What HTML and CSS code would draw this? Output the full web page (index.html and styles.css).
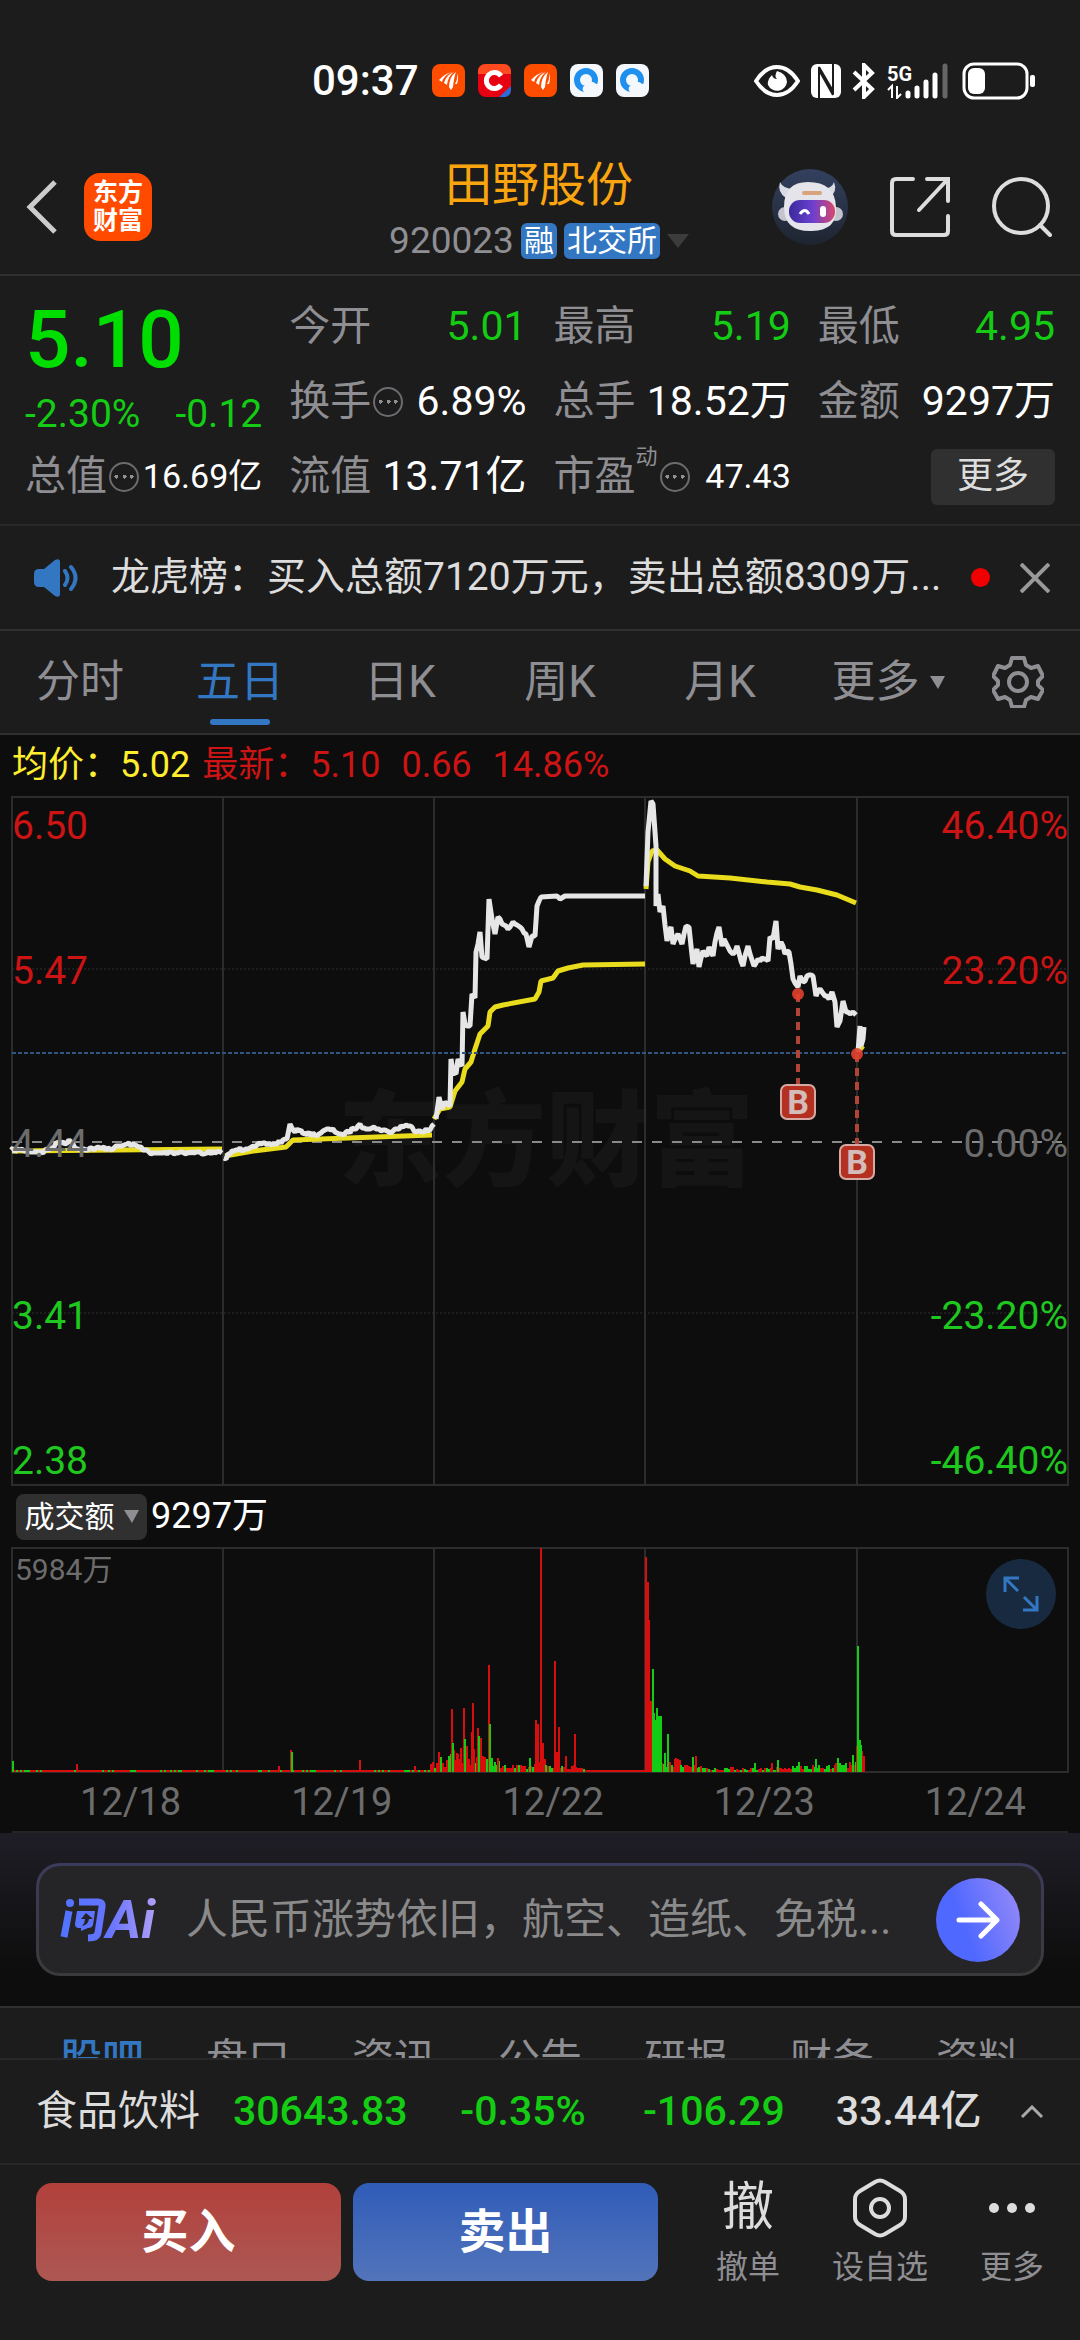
FILE: index.html
```html
<!DOCTYPE html>
<html lang="zh-CN">
<head>
    <meta charset="UTF-8">
    <meta name="viewport" content="width=device-width, initial-scale=1.0">
    <title>田野股份 920023</title>
    <link rel="stylesheet" href="styles.css">
</head>
<body>
    <div class="status-bar">
        <div class="status-left">
            <span class="time">09:37</span>
            <svg class="app-icon" viewBox="0 0 33 33"><rect width="33" height="33" rx="8" fill="#ff4d00"/><path d="M7 16q5-6 13-8-8 3-10 10zM12 19q2-8 10-11-6 4-7 13zM17 23q0-10 7-15-2 5-3 15l-2 3zM23 20q3-5 2-11 2 5 0 11z" fill="#fff"/></svg>
            <svg class="app-icon" viewBox="0 0 33 33"><rect width="33" height="33" rx="8" fill="#e60012"/><path d="M0 8q0-8 8-8h17q8 0 8 8v2H0z" fill="#ff4a20"/><path d="M23 12a8 8 0 1 0 0 9" fill="none" stroke="#fff" stroke-width="5"/><path d="M33 22v3q0 8-8 8h-4z" fill="#2a6bd8"/></svg>
            <svg class="app-icon" viewBox="0 0 33 33"><rect width="33" height="33" rx="8" fill="#ff4d00"/><path d="M7 16q5-6 13-8-8 3-10 10zM12 19q2-8 10-11-6 4-7 13zM17 23q0-10 7-15-2 5-3 15l-2 3zM23 20q3-5 2-11 2 5 0 11z" fill="#fff"/></svg>
            <svg class="app-icon" viewBox="0 0 33 33"><rect width="33" height="33" rx="8" fill="#f4f8fc"/><circle cx="16" cy="16" r="9" fill="none" stroke="#1f90ee" stroke-width="6"/><path d="M14 28a4 4 0 0 1 2-7 6 6 0 0 1 10-1 4 4 0 0 1 3 8z" fill="#f4f8fc"/></svg>
            <svg class="app-icon" viewBox="0 0 33 33"><rect width="33" height="33" rx="8" fill="#f4f8fc"/><circle cx="16" cy="16" r="9" fill="none" stroke="#1f90ee" stroke-width="6"/><path d="M14 28a4 4 0 0 1 2-7 6 6 0 0 1 10-1 4 4 0 0 1 3 8z" fill="#f4f8fc"/></svg>
        </div>
        <div class="status-right">
            <svg width="46" height="34" viewBox="0 0 46 34"><path d="M2 17Q11 3 23 3t21 14Q35 31 23 31T2 17z" fill="none" stroke="#fff" stroke-width="4"/><path d="M23 7q-3 5 0 8-4 0-5-4-5 5-4 10a10 10 0 0 0 19-3q0-8-10-11z" fill="#fff"/></svg>
            <svg width="30" height="34" viewBox="0 0 30 34"><rect width="30" height="34" rx="6" fill="#fff"/><path d="M8 34V6l14 25M22 0v27L8 3" fill="none" stroke="#1c1c1c" stroke-width="2"/></svg>
            <svg width="24" height="36" viewBox="0 0 24 36"><path d="M2 9l18 17-8 8V2l8 8L2 27" fill="none" stroke="#fff" stroke-width="4"/></svg>
            <svg width="64" height="36" viewBox="0 0 64 36"><text x="0" y="18" class="net">5G</text><path d="M1 27l4-4v12M10 23v12l4-4" fill="none" stroke="#fff" stroke-width="2"/><path d="M21 30v3M30 25v8M39 19v14M48 12v21" stroke="#fff" stroke-width="5" stroke-linecap="round"/><path d="M58 3v30" stroke="#666" stroke-width="5" stroke-linecap="round"/></svg>
            <svg width="74" height="38" viewBox="0 0 74 38"><rect x="2" y="2" width="63" height="34" rx="10" fill="none" stroke="#fff" stroke-width="3"/><rect x="6" y="6" width="17" height="26" rx="6" fill="#fff"/><rect x="68" y="13" width="5" height="12" rx="2" fill="#fff"/></svg>
        </div>
    </div>

    <header class="header">
        <div class="header-left">
            <button class="icon-btn" aria-label="返回"><svg width="32" height="56" viewBox="0 0 32 56"><path d="M29 3L4 28l25 25" fill="none" stroke="#ccc" stroke-width="5"/></svg></button>
            <a href="#" class="brand"><span>东方</span><span>财富</span></a>
        </div>
        <div class="title">
            <h1>田野股份</h1>
            <div class="code-row">
                <span class="code">920023</span>
                <span class="badge">融</span>
                <span class="badge">北交所</span>
                <svg width="22" height="14" viewBox="0 0 22 14"><path d="M0 0h22L11 14z" fill="#3c3c3c"/></svg>
            </div>
        </div>
        <div class="header-right">
            <button class="icon-btn" aria-label="智能助手">
                <svg width="76" height="76" viewBox="0 0 76 76">
                    <defs><linearGradient id="visor"><stop offset="0" stop-color="#3a2a9c"/><stop offset="0.5" stop-color="#6a3fd0"/><stop offset="1" stop-color="#d8486c"/></linearGradient><linearGradient id="orb" x2="0" y2="1"><stop offset="0" stop-color="#33415f"/><stop offset="1" stop-color="#1e2430"/></linearGradient></defs>
                    <circle cx="38" cy="38" r="38" fill="url(#orb)"/>
                    <path d="M8 13q-3 10 6 16l8-9Q11 20 8 13zM62 13q4 10-5 16l-7-9q10 0 12-7z" fill="#d9dae2"/>
                    <circle cx="13" cy="45" r="7" fill="#c3c4ce"/><circle cx="64" cy="45" r="7" fill="#c3c4ce"/>
                    <path d="M12 38q0-25 24-25 27 0 28 25 2 23-24 24-28 1-28-24z" fill="#e4e4ea"/>
                    <rect x="30" y="22" width="20" height="4" rx="2" fill="#d9a47c"/>
                    <rect x="17" y="31" width="46" height="23" rx="11" fill="url(#visor)"/>
                    <path d="M28 45q5-7 9 0" fill="none" stroke="#fff" stroke-width="3"/><rect x="48" y="37" width="6" height="11" rx="3" fill="#fff"/>
                </svg>
            </button>
            <button class="icon-btn" aria-label="分享"><svg width="60" height="60" viewBox="0 0 60 60"><path d="M23 2H6q-4 0-4 4v48q0 4 4 4h48q4 0 4-4V39M37 2h21v22M57 3L29 33" fill="none" stroke="#ddd" stroke-width="4" stroke-linecap="round"/></svg></button>
            <button class="icon-btn" aria-label="搜索"><svg width="60" height="60" viewBox="0 0 60 60"><circle cx="29" cy="29" r="27" fill="none" stroke="#ddd" stroke-width="4"/><path d="M48 48l10 10" stroke="#ddd" stroke-width="4" stroke-linecap="round"/></svg></button>
        </div>
    </header>

    <section class="quote">
        <div class="price-box">
            <div class="price">5.10</div>
            <div class="change"><span>-2.30%</span><span>-0.12</span></div>
        </div>
        <div class="cell"><span class="label">今开</span><span class="value down">5.01</span></div>
        <div class="cell"><span class="label">最高</span><span class="value down">5.19</span></div>
        <div class="cell"><span class="label">最低</span><span class="value down">4.95</span></div>
        <div class="cell"><span class="label">换手<i class="info"></i></span><span class="value">6.89%</span></div>
        <div class="cell"><span class="label">总手</span><span class="value">18.52万</span></div>
        <div class="cell"><span class="label">金额</span><span class="value">9297万</span></div>
        <div class="cell"><span class="label">总值<i class="info"></i></span><span class="value small">16.69亿</span></div>
        <div class="cell"><span class="label">流值</span><span class="value">13.71亿</span></div>
        <div class="cell"><span class="label">市盈<sup>动</sup><i class="info"></i></span><span class="value small">47.43</span></div>
        <div class="cell cell-more"><button class="more-btn">更多</button></div>
    </section>

    <div class="notice">
        <svg width="46" height="38" viewBox="0 0 46 38"><path d="M0 15q0-5 5-5h5L21 1q5-2 5 2v32q0 4-5 2l-11-9H5q-5 0-5-5z" fill="#3377c2"/><path d="M31 12q5 7 0 14M37 8q9 11 0 22" fill="none" stroke="#3377c2" stroke-width="4" stroke-linecap="round"/></svg>
        <a href="#" class="notice-text">龙虎榜：买入总额7120万元，卖出总额8309万...</a>
        <span class="dot"></span>
        <button class="icon-btn" aria-label="关闭"><svg width="30" height="30" viewBox="0 0 30 30"><path d="M1 1l28 28M29 1L1 29" stroke="#999" stroke-width="4"/></svg></button>
    </div>

    <nav class="chart-tabs">
        <button>分时</button>
        <button class="active">五日</button>
        <button>日K</button>
        <button>周K</button>
        <button>月K</button>
        <button>更多<svg width="15" height="13" viewBox="0 0 15 13"><path d="M0 0h15L8 13z" fill="#8e8e93"/></svg></button>
        <button aria-label="设置"><svg width="52" height="52" viewBox="0 0 52 52"><path d="M20 2h12l2 7 5 3 7-2 5 10-5 5v4l5 5-5 9-7-2-5 3-2 7H20l-2-7-5-3-7 2-5-9 5-5v-4l-5-5 5-10 7 2 5-3z" fill="none" stroke="#8e8e93" stroke-width="4" stroke-linejoin="round"/><circle cx="26" cy="26" r="9" fill="none" stroke="#8e8e93" stroke-width="4"/></svg></button>
    </nav>

    <main class="chart">
        <div class="legend">
            <span class="avg">均价：5.02</span>
            <span class="last">最新：5.10</span>
            <span class="last">0.66</span>
            <span class="last">14.86%</span>
        </div>

        <svg class="price-chart" viewBox="0 0 1080 690">
            <text x="338" y="382" class="watermark">东方财富</text>
            <path class="grid-line" d="M12 1H1068V689H12ZM223 1V689M434 1V689M645 1V689M857 1V689"/>
            <path class="grid-dot" d="M12 173H1068M12 517H1068"/>
            <path class="zero-line" d="M12 346H1068"/>
            <g id="priceLines"></g>
            <path class="now-line" d="M12 257H1068"/>
            <g class="up">
                <text x="12" y="43">6.50</text><text x="12" y="188">5.47</text>
                <text x="1068" y="43" class="end">46.40%</text><text x="1068" y="188" class="end">23.20%</text>
            </g>
            <g class="flat"><text x="12" y="361">4.44</text><text x="1068" y="361" class="end">0.00%</text></g>
            <g class="down">
                <text x="12" y="533">3.41</text><text x="12" y="678">2.38</text>
                <text x="1068" y="533" class="end">-23.20%</text><text x="1068" y="678" class="end">-46.40%</text>
            </g>
            <g class="trade">
                <path d="M798 198V289"/><circle cx="798" cy="198" r="6"/>
                <rect x="781" y="289" width="34" height="34" rx="6"/><text x="798" y="318">B</text>
                <path d="M857 258V349"/><circle cx="857" cy="258" r="6"/>
                <rect x="840" y="349" width="34" height="34" rx="6"/><text x="857" y="378">B</text>
            </g>
        </svg>

        <div class="volume-head">
            <button class="pill">成交额<svg width="15" height="13" viewBox="0 0 15 13"><path d="M0 0h15L8 13z" fill="#8e8e93"/></svg></button>
            <span>9297万</span>
        </div>
        <div class="volume-wrap">
            <svg class="volume-chart" viewBox="0 0 1080 226">
                <path class="grid-line" d="M12 1H1068V225H12ZM223 1V225M434 1V225M645 1V225M857 1V225"/>
                <g id="volumeBars"></g>
                <text x="15" y="33" class="max">5984万</text>
            </svg>
            <button class="expand" aria-label="全屏"><svg width="36" height="36" viewBox="0 0 36 36"><path d="M2 16V2h14M3 3l12 12M34 20v14H20M33 33L21 21" fill="none" stroke="#3377c2" stroke-width="3"/></svg></button>
        </div>
        <div class="dates">
            <span>12/18</span><span>12/19</span><span>12/22</span><span>12/23</span><span>12/24</span>
        </div>
    </main>

    <section class="ai">
        <div class="ai-box">
            <svg width="98" height="44" viewBox="0 0 98 44">
                <defs><linearGradient id="aiFill" gradientUnits="userSpaceOnUse" x1="0" y1="0" x2="98" y2="0"><stop offset="0" stop-color="#4f74ff"/><stop offset="0.5" stop-color="#6673ff"/><stop offset="1" stop-color="#b3a0f5"/></linearGradient></defs>
                <circle cx="10" cy="5" r="4" fill="url(#aiFill)"/>
                <path d="M9 13L4 39M19 4h19q5 0 4 5l-4 26q-1 5-10 5" fill="none" stroke="url(#aiFill)" stroke-width="7"/>
                <path d="M17 13h18l-2 14q-1 3-5 3l-7 3v-3h-2q-4 0-4-4z" fill="url(#aiFill)"/>
                <path d="M26 15l-5 6h4q0 4-3 7 6-1 7-7h4z" fill="#252527"/>
                <text x="46" y="40" class="ai-logo">Ai</text>
            </svg>
            <a href="#" class="ai-text">人民币涨势依旧，航空、造纸、免税...</a>
            <button class="ai-go" aria-label="提问"><svg width="44" height="38" viewBox="0 0 44 38"><path d="M3 19h37M25 3l16 16-16 16" fill="none" stroke="#fff" stroke-width="5" stroke-linecap="round" stroke-linejoin="round"/></svg></button>
        </div>
    </section>

    <nav class="sub-tabs">
        <a href="#" class="active">股吧</a>
        <a href="#">盘口</a>
        <a href="#">资讯</a>
        <a href="#">公告</a>
        <a href="#">研报</a>
        <a href="#">财务</a>
        <a href="#">资料</a>
    </nav>

    <div class="ticker">
        <span class="sector">食品饮料</span>
        <b class="down">30643.83</b>
        <b class="down">-0.35%</b>
        <b class="down">-106.29</b>
        <b>33.44亿</b>
        <svg width="24" height="14" viewBox="0 0 24 14"><path d="M2 12L12 2l10 10" fill="none" stroke="#aaa" stroke-width="3"/></svg>
    </div>

    <footer class="actions">
        <button class="trade-btn buy">买入</button>
        <button class="trade-btn sell">卖出</button>
        <div class="tools">
            <button class="tool"><span class="tool-icon">撤</span>撤单</button>
            <button class="tool"><span class="tool-icon"><svg width="54" height="60" viewBox="0 0 54 60"><path d="M22 4q5-3 10 0l15 9q5 3 5 8v18q0 5-5 8l-15 9q-5 3-10 0L7 47q-5-3-5-8V21q0-5 5-8z" fill="none" stroke="#ddd" stroke-width="4"/><circle cx="27" cy="30" r="9" fill="none" stroke="#ddd" stroke-width="4"/></svg></span>设自选</button>
            <button class="tool"><span class="tool-icon"><svg width="48" height="12" viewBox="0 0 48 12"><circle cx="6" cy="6" r="5" fill="#ddd"/><circle cx="24" cy="6" r="5" fill="#ddd"/><circle cx="42" cy="6" r="5" fill="#ddd"/></svg></span>更多</button>
        </div>
    </footer>

    <script src="chart.js"></script>
</body>
</html>
```
FILE: styles.css
```css
* {
    margin: 0;
    padding: 0;
    box-sizing: border-box;
}

body {
    min-height: 100vh;
    background: #1c1c1c;
    color: #fff;
    font-family: Roboto, "Noto Sans CJK SC", sans-serif;
    font-size: 41px;
    line-height: 1.2;
}

button {
    padding: 0;
    background: none;
    border: none;
    color: inherit;
    font: inherit;
    cursor: pointer;
}

a {
    color: inherit;
    text-decoration: none;
}

svg {
    display: block;
    flex: none;
}

.down {
    color: #14cc14;
    fill: #1fc81f;
}

/* status bar */
.status-bar {
    display: flex;
    justify-content: space-between;
    align-items: center;
    height: 140px;
    padding: 22px 44px 0 312px;
}

.status-left, .status-right {
    display: flex;
    align-items: center;
    gap: 13px;
}

.status-right {
    gap: 11px;
}

.time {
    font-size: 42px;
    font-weight: 500;
}

.app-icon {
    width: 33px;
    height: 33px;
}

.net {
    fill: #fff;
    font-size: 20px;
    font-weight: 700;
}

/* header */
.header {
    display: grid;
    grid-template-columns: 1fr auto 1fr;
    align-items: center;
    height: 136px;
    padding: 0 28px 0 26px;
    border-bottom: 2px solid #303030;
}

.header-left, .header-right {
    display: flex;
    align-items: center;
    gap: 26px;
}

.header-right {
    justify-content: flex-end;
    gap: 42px;
}

.brand {
    display: flex;
    flex-direction: column;
    align-items: center;
    justify-content: center;
    width: 68px;
    height: 68px;
    border-radius: 16px;
    background: #ff4a00;
    font-size: 25px;
    font-weight: 700;
    line-height: 28px;
}

.title {
    text-align: center;
}

.title h1 {
    color: #faa50f;
    font-size: 47px;
    font-weight: 400;
    line-height: 68px;
}

.code-row {
    display: flex;
    align-items: center;
    justify-content: center;
    gap: 7px;
    height: 44px;
    color: #8e8e93;
}

.code {
    font-size: 37px;
}

.badge {
    padding: 0 3px;
    border-radius: 6px;
    background: #3377c2;
    color: #fff;
    font-size: 30px;
    line-height: 36px;
}

/* quote */
.quote {
    display: grid;
    grid-template-columns: repeat(4, 1fr);
    grid-auto-rows: 75px;
    column-gap: 27px;
    height: 250px;
    padding: 13px 25px 11px;
    border-bottom: 2px solid #282828;
}

.price-box {
    grid-row: span 2;
    color: #0d0;
}

.price {
    font-size: 80px;
    font-weight: 500;
    line-height: 102px;
}

.change {
    display: flex;
    justify-content: space-between;
    font-size: 39px;
    line-height: 46px;
    color: #14cc14;
}

.cell {
    display: flex;
    align-items: center;
    justify-content: space-between;
    white-space: nowrap;
}

.label {
    display: flex;
    align-items: center;
    color: #8e8e93;
}

.label sup {
    align-self: flex-start;
    margin-top: -6px;
    font-size: 22px;
    line-height: 22px;
}

.info {
    width: 30px;
    height: 30px;
    margin-left: 2px;
    border: 2px solid #6c6c70;
    border-radius: 50%;
    background: radial-gradient(circle, #8e8e93 2px, transparent 2px) center / 7px 7px no-repeat,
        radial-gradient(circle, #8e8e93 2px, transparent 2px) left 2px center / 7px 7px no-repeat,
        radial-gradient(circle, #8e8e93 2px, transparent 2px) right 2px center / 7px 7px no-repeat;
}

.value.small {
    font-size: 34px;
}

.cell-more {
    justify-content: flex-end;
}

.more-btn {
    width: 124px;
    height: 56px;
    border-radius: 6px;
    background: #303030;
    color: #ddd;
    font-size: 36px;
}

/* notice */
.notice {
    display: flex;
    align-items: center;
    height: 105px;
    padding: 0 30px 0 34px;
    border-bottom: 2px solid #303030;
}

.notice-text {
    flex: 1;
    margin-left: 31px;
    overflow: hidden;
    color: #ddd;
    font-size: 39px;
    white-space: nowrap;
}

.dot {
    width: 19px;
    height: 19px;
    margin-right: 30px;
    border-radius: 50%;
    background: #f00000;
}

/* chart period tabs */
.chart-tabs {
    display: grid;
    grid-template-columns: repeat(5, 160fr) 176fr 84fr;
    height: 104px;
    padding-right: 20px;
    border-bottom: 2px solid #303030;
    color: #8e8e93;
}

.chart-tabs button {
    position: relative;
    display: flex;
    align-items: center;
    justify-content: center;
    gap: 10px;
    font-size: 44px;
}

.chart-tabs .active {
    color: #3377c2;
}

.chart-tabs .active::after {
    content: "";
    position: absolute;
    bottom: 8px;
    width: 60px;
    height: 6px;
    border-radius: 3px;
    background: #3377c2;
}

/* chart */
.chart {
    background: #0d0d0d;
}

.legend {
    display: flex;
    align-items: center;
    height: 61px;
    padding-left: 12px;
    font-size: 36px;
}

.avg {
    margin-right: 12px;
    color: #ffee2e;
}

.last {
    margin-right: 21px;
    color: #cc1414;
}

.price-chart, .volume-chart {
    width: 100%;
}

.grid-line {
    fill: none;
    stroke: #2c2c2c;
    stroke-width: 2;
}

.grid-dot {
    stroke: #303030;
    stroke-dasharray: 2 2;
}

.zero-line {
    stroke: #8a8a8a;
    stroke-width: 2;
    stroke-dasharray: 10 10;
}

.now-line {
    stroke: #2f5580;
    stroke-width: 2;
    stroke-dasharray: 4 2;
}

.price-chart .end {
    text-anchor: end;
}

.price-chart text {
    font-size: 39px;
}

.price-chart .watermark {
    fill: #151515;
    font-size: 104px;
    font-weight: 900;
}

.up {
    fill: #cc1414;
}

.flat {
    fill: #6c6c6c;
}

.line {
    fill: none;
    stroke-width: 5;
    stroke-linejoin: bevel;
}

.line.price-line {
    stroke: #e6e6e6;
}

.line.avg-line {
    stroke: #e8dc1c;
}

.trade path {
    stroke: #b24435;
    stroke-width: 4;
    stroke-dasharray: 8 6;
}

.trade circle {
    fill: #e0402e;
    opacity: 0.9;
}

.trade rect {
    fill: #b43122;
    stroke: #d6aaa4;
    stroke-width: 2;
}

.price-chart .trade text {
    fill: #d3bcb9;
    font-size: 34px;
    font-weight: 700;
    text-anchor: middle;
}

.volume-head {
    display: flex;
    align-items: center;
    gap: 4px;
    height: 61px;
    padding-left: 16px;
    font-size: 36px;
}

.pill {
    display: flex;
    align-items: center;
    justify-content: center;
    gap: 9px;
    width: 131px;
    height: 46px;
    border-radius: 8px;
    background: #303030;
    font-size: 30px;
}

.volume-wrap {
    position: relative;
}

.max {
    fill: #6c6c6c;
    font-size: 30px;
}

.expand {
    position: absolute;
    top: 12px;
    right: 24px;
    display: flex;
    align-items: center;
    justify-content: center;
    width: 70px;
    height: 70px;
    border-radius: 50%;
    background: #182a40;
}

.dates {
    display: grid;
    grid-template-columns: repeat(5, 1fr);
    margin: 0 12px;
    border-bottom: 2px solid #242424;
    color: #6c6c6c;
    font-size: 38px;
    line-height: 58px;
    text-align: center;
}

.dates span {
    padding-left: 26px;
}

/* ai bar */
.ai {
    padding: 30px 36px;
    border-bottom: 2px solid #303030;
    background: linear-gradient(#1f1e26, #0d0d0d 80%);
}

.ai-box {
    display: flex;
    align-items: center;
    height: 113px;
    padding: 0 21px;
    border: 3px solid transparent;
    border-radius: 24px;
    background: linear-gradient(#252527, #252527) padding-box,
        linear-gradient(#3b3b5c, #3a3a3a) border-box;
}

.ai-logo {
    fill: url(#aiFill);
    font-size: 54px;
    font-style: italic;
    font-weight: 700;
}

.ai-text {
    flex: 1;
    margin-left: 28px;
    overflow: hidden;
    color: #8a8a8a;
    font-size: 42px;
    line-height: 60px;
    white-space: nowrap;
}

.ai-go {
    display: flex;
    align-items: center;
    justify-content: center;
    width: 84px;
    height: 84px;
    border-radius: 50%;
    background: linear-gradient(70deg, #4f68ff 35%, #9a8cf8);
}

/* lower tabs, cut off by the ticker */
.sub-tabs {
    display: grid;
    grid-template-columns: repeat(7, 1fr);
    height: 52px;
    padding: 22px 29px 0;
    overflow: hidden;
    border-bottom: 2px solid #282828;
    color: #8e8e93;
    font-size: 42px;
    line-height: 60px;
    text-align: center;
}

.sub-tabs .active {
    color: #3377c2;
    font-weight: 500;
}

.ticker {
    display: grid;
    grid-template-columns: 190fr 192fr 216fr 168fr 224fr 24px;
    align-items: center;
    height: 105px;
    padding: 0 36px;
    border-bottom: 2px solid #282828;
    color: #ddd;
    white-space: nowrap;
}

.ticker b {
    font-weight: 500;
    text-align: center;
}

.actions {
    display: grid;
    grid-template-columns: 305fr 305fr 408fr;
    column-gap: 12px;
    padding: 18px 2px 54px 36px;
}

.trade-btn {
    height: 98px;
    border-radius: 16px;
    font-size: 47px;
    font-weight: 700;
}

.buy {
    background: linear-gradient(#b2403b, #ad5854);
}

.sell {
    background: linear-gradient(#305cb8, #5274ba);
}

.tools {
    display: grid;
    grid-template-columns: repeat(3, 1fr);
    padding-left: 12px;
}

.tool {
    display: flex;
    flex-direction: column;
    align-items: center;
    color: #8e8e93;
    font-size: 32px;
    line-height: 36px;
    white-space: nowrap;
}

.tool-icon {
    display: flex;
    align-items: center;
    height: 50px;
    margin-bottom: 16px;
    color: #ddd;
    font-size: 52px;
}
```
FILE: chart.js
```js
const SVG = 'http://www.w3.org/2000/svg';
const priceLines = document.getElementById('priceLines');
const volumeBars = document.getElementById('volumeBars');

// one string per trading day
const avgDays = [
    '12,355 222,353',
    '225,360 253,355 286,351 293,344 432,339',
    '434,323 440,313 450,311 455,295 462,286 465,273 471,266 475,253 480,238 488,230 490,216 495,211 503,209 535,203 539,196 541,185 553,182 558,175 568,172 583,169 645,168',
    '646,93 648,66 652,55 657,54 665,63 675,70 690,75 698,80 730,82 767,86 790,88 800,91 817,94 837,99 856,107',
    '858,256 863,250'
];

const priceDays = [
    '11,354 20,354 41,356 52,352 59,346 71,346 78,353 114,352 127,348 141,351 151,358 172,356 207,357 222,357',
    '224,362 234,355 253,350 275,348 287,343 290,328 293,334 315,339 329,333 344,339 358,330 379,333 389,336 406,329 418,335 430,334 434,328',
    '436,323 439,301 442,313 445,306 450,310 451,263 453,276 456,278 458,263 462,270 463,216 465,228 470,230 472,198 475,202 476,156 480,136 482,161 487,163 489,103 492,123 495,138 498,121 502,128 508,133 513,126 520,131 526,138 529,151 532,140 535,140 537,110 541,101 557,100 560,103 565,100 645,100',
    '646,90 648,36 651,5 653,8 656,50 656,110 658,98 660,116 663,110 667,145 671,131 673,148 678,138 682,148 686,130 689,131 693,168 697,153 699,171 703,155 707,160 709,151 713,160 715,146 719,131 722,150 724,143 733,158 737,150 743,170 748,150 754,170 758,163 768,165 770,141 773,143 776,125 778,153 781,146 785,158 789,156 793,183 798,191 800,180 803,186 807,180 813,180 816,200 820,193 825,200 829,203 832,196 835,206 837,231 840,225 843,205 846,216 853,216 856,219',
    '858,256 860,230 861,250 863,243 864,231'
];

let seed = 7;
function random() {
    seed = (seed * 16807) % 2147483647;
    return seed / 2147483647;
}

function addLine(points, className) {
    const line = document.createElementNS(SVG, 'polyline');
    line.setAttribute('points', points);
    line.setAttribute('class', 'line ' + className);
    priceLines.appendChild(line);
}

function addTicks(points) {
    const list = points.split(' ').map(p => p.split(',').map(Number));
    const out = [];
    list.forEach(([x, y], i) => {
        out.push(x + ',' + y);
        const next = list[i + 1];
        if (!next || next[1] === 100) return;
        for (let tx = x + 2; tx < next[0] - 1; tx += 2) {
            const ty = y + (next[1] - y) * (tx - x) / (next[0] - x);
            out.push(tx + ',' + Math.round(ty + random() * 4 - 2));
        }
    });
    return out.join(' ');
}

avgDays.forEach(day => addLine(day, 'avg-line'));
priceDays.forEach(day => addLine(addTicks(day), 'price-line'));

function addBar(x, height, color) {
    const bar = document.createElementNS(SVG, 'rect');
    bar.setAttribute('x', x);
    bar.setAttribute('y', 225 - height);
    bar.setAttribute('width', 2);
    bar.setAttribute('height', height);
    bar.setAttribute('fill', color);
    volumeBars.appendChild(bar);
}

const RED = '#d80d0d';
const GREEN = '#14cc14';

// [from, to, average height, share of green bars]
const ranges = [
    [12, 430, 2, 0.3],
    [430, 448, 10, 0.3],
    [448, 486, 16, 0.3],
    [486, 500, 12, 0.5],
    [500, 534, 6, 0.5],
    [534, 545, 12, 0],
    [545, 585, 6, 0.1],
    [585, 645, 2, 0],
    [650, 661, 40, 0.7],
    [661, 680, 12, 0.5],
    [680, 702, 8, 0.5],
    [702, 790, 4, 0.5],
    [790, 835, 6, 0.5],
    [835, 856, 9, 0.5],
    [856, 864, 12, 0.5]
];

ranges.forEach(([from, to, height, green]) => {
    for (let x = from; x < to; x += 2) {
        const h = Math.max(2, Math.round(height * (0.4 + random() * 0.8)));
        addBar(x, h, random() < green ? GREEN : RED);
    }
});

const redBars = [[76, 8], [278, 6], [290, 22], [359, 12], [414, 6], [438, 20], [451, 63], [453, 22], [457, 18], [460, 24], [463, 64], [466, 26], [471, 40], [472, 69], [473, 23], [477, 44], [480, 34], [488, 107], [497, 14], [535, 52], [537, 48], [540, 224], [542, 29], [554, 111], [556, 20], [558, 45], [565, 16], [574, 38], [645, 215], [647, 190], [648, 152], [650, 71], [674, 13], [695, 16], [771, 9], [856, 26], [861, 21], [863, 16]];
const greenBars = [[12, 11], [291, 20], [440, 15], [452, 29], [464, 33], [478, 36], [489, 48], [491, 14], [529, 14], [652, 103], [653, 59], [654, 52], [656, 64], [658, 56], [660, 56], [664, 19], [667, 38], [692, 15], [754, 9], [777, 12], [798, 10], [815, 13], [837, 14], [852, 17], [857, 126], [859, 32], [860, 27]];

redBars.forEach(([x, h]) => addBar(x, h, RED));
greenBars.forEach(([x, h]) => addBar(x, h, GREEN));
```
